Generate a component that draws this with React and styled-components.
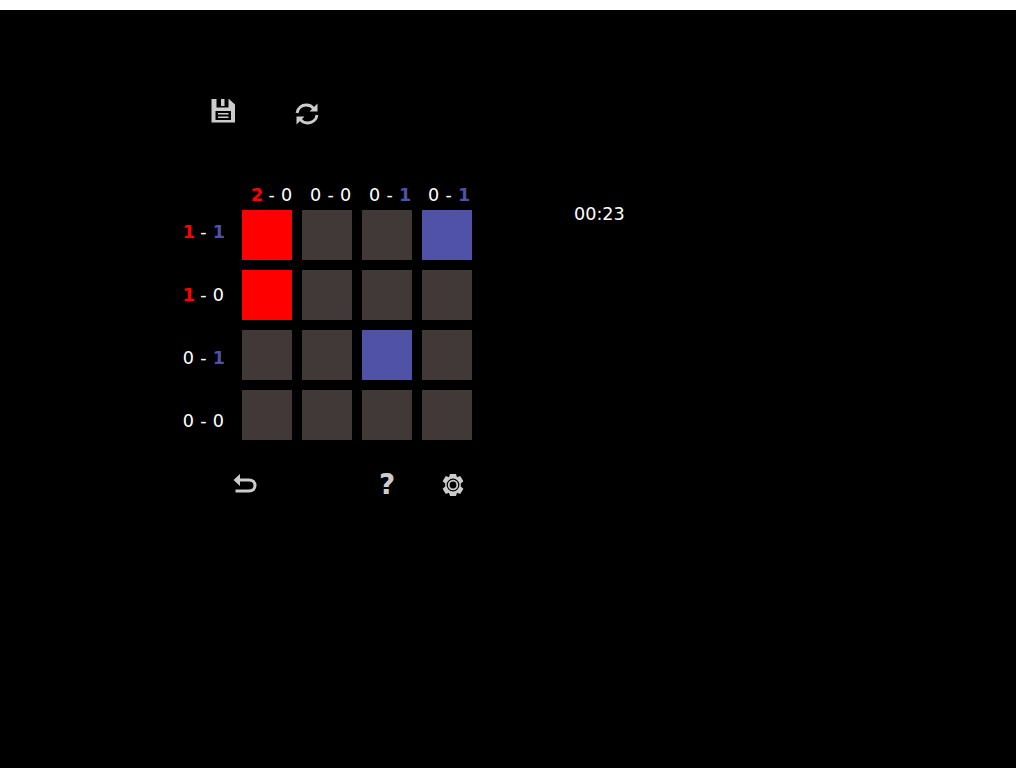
import React from 'react';
import styled, { createGlobalStyle } from 'styled-components';

const RED = '#ff0000';
const BLUE = '#4f52a6';
const EMPTY = '#413938';

const board = [
  ['r', '', '', 'b'],
  ['r', '', '', ''],
  ['', '', 'b', ''],
  ['', '', '', ''],
];

const colScores = [[2, 0], [0, 0], [0, 1], [0, 1]];
const rowScores = [[1, 1], [1, 0], [0, 1], [0, 0]];

const Score = ({ red, blue }) => (
  <>
    <Num $color={red > 0 ? RED : null}>{red}</Num> - <Num $color={blue > 0 ? BLUE : null}>{blue}</Num>
  </>
);

const SaveIcon = () => (
  <svg width="26" height="26" viewBox="0 0 26 26">
    <path
      fill="#ccc"
      fillRule="evenodd"
      d="M1.5 1H19L25 6.5V24.5H1.5ZM6.5 1V9.5H18.5V1H14.5V8H11V1ZM5.5 13V22H21V13ZM8 15H18.5V16.6H8ZM8 18.4H18.5V20H8Z"
    />
  </svg>
);

const RefreshIcon = () => (
  <svg width="26" height="26" viewBox="0 0 26 26">
    <path fill="none" stroke="#ccc" strokeWidth="2.8" d="M3 12C3.5 7 8 3.8 12.5 4C15.5 4.1 18 5.3 19.5 7.5" />
    <path fill="#ccc" d="M23.5 2.5V10.5H15.5Z" />
    <path fill="none" stroke="#ccc" strokeWidth="2.8" d="M23 14C22.5 19 18 22.2 13.5 22C10.5 21.9 8 20.7 6.5 18.5" />
    <path fill="#ccc" d="M2.5 23.5V15.5H10.5Z" />
  </svg>
);

const UndoIcon = () => (
  <svg width="26" height="26" viewBox="0 0 26 26">
    <path fill="none" stroke="#ccc" strokeWidth="3" d="M6 8H17C20.5 8 23 10 23 13.5C23 17 20.5 19 17 19H3.5" />
    <path fill="#ccc" d="M1.5 8L8 2V14Z" />
  </svg>
);

const GearIcon = () => (
  <svg width="26" height="26" viewBox="0 0 26 26">
    <path
      fill="#ccc"
      fillRule="evenodd"
      d="M10 2H16L17 5.2L20.2 4L23.4 9.2L20.8 11.4V14.6L23.4 16.8L20.2 22L17 20.8L16 24H10L9 20.8L5.8 22L2.6 16.8L5.2 14.6V11.4L2.6 9.2L5.8 4L9 5.2Z"
    />
    <circle cx="13" cy="13" r="5.8" fill="none" stroke="#000" strokeWidth="1.2" />
    <circle cx="13" cy="13" r="3.4" fill="#000" />
  </svg>
);

const App = () => (
  <>
    <GlobalStyle />
    <Page>
      <TopBar>
        <IconButton><SaveIcon /></IconButton>
        <IconButton $offset={3}><RefreshIcon /></IconButton>
      </TopBar>
      <Game>
        <RowLabels>
          {rowScores.map(([r, b], i) => (
            <RowLabel key={i}><Score red={r} blue={b} /></RowLabel>
          ))}
        </RowLabels>
        <Center>
          <ColLabels>
            {colScores.map(([r, b], i) => (
              <ColLabel key={i}><Score red={r} blue={b} /></ColLabel>
            ))}
          </ColLabels>
          <Grid>
            {board.flat().map((c, i) => (
              <Cell key={i} $color={c === 'r' ? RED : c === 'b' ? BLUE : EMPTY} />
            ))}
          </Grid>
          <BottomBar>
            <IconButton><UndoIcon /></IconButton>
            <Help>?</Help>
            <IconButton $offset={1}><GearIcon /></IconButton>
          </BottomBar>
        </Center>
        <Timer>00:23</Timer>
      </Game>
    </Page>
  </>
);

const GlobalStyle = createGlobalStyle`
  html, body {
    background: #fff;
  }
  body {
    margin: 10px 8px 0 0;
    font-family: "DejaVu Sans", sans-serif;
  }
`;

const Page = styled.div`
  height: 758px;
  overflow: hidden;
  background: #000;
  color: #fff;
  padding-top: 88px;
  box-sizing: border-box;
  font-size: 17.6px;
  word-spacing: 0.6px;
`;

const TopBar = styled.div`
  display: flex;
  gap: 58px;
  margin-left: 210px;
  height: 87px;
`;

const IconButton = styled.div`
  width: 26px;
  height: 26px;
  margin-top: ${props => props.$offset || 0}px;
  svg {
    display: block;
  }
`;

const Game = styled.div`
  display: flex;
`;

const RowLabels = styled.div`
  width: 224px;
  padding-top: 16px;
  display: flex;
  flex-direction: column;
`;

const RowLabel = styled.div`
  height: 63px;
  line-height: 63px;
  text-align: right;
  white-space: pre;
`;

const Center = styled.div`
  margin-left: 18px;
  width: 245px;
`;

const ColLabels = styled.div`
  display: flex;
  height: 25px;
  margin-left: 9px;
`;

const ColLabel = styled.div`
  flex: 0 0 59px;
  line-height: 20px;
  white-space: pre;
`;

const Grid = styled.div`
  display: grid;
  grid-template-columns: repeat(4, 50px);
  grid-auto-rows: 50px;
  gap: 10px;
`;

const Cell = styled.div`
  background: ${props => props.$color};
`;

const BottomBar = styled.div`
  display: flex;
  align-items: center;
  margin-top: 31px;
  margin-left: -10px;
`;

const Help = styled.div`
  width: 26px;
  margin-left: 116px;
  margin-right: 40px;
  text-align: center;
  color: #ccc;
  font-weight: bold;
  font-size: 28px;
  line-height: 26px;
`;

const Timer = styled.div`
  margin-left: 87px;
  margin-top: 15px;
  line-height: 28px;
`;

const Num = styled.span`
  color: ${props => props.$color || '#fff'};
  font-weight: ${props => (props.$color ? 'bold' : 'normal')};
  letter-spacing: ${props => (props.$color ? '-1px' : '0')};
`;

export default App;
